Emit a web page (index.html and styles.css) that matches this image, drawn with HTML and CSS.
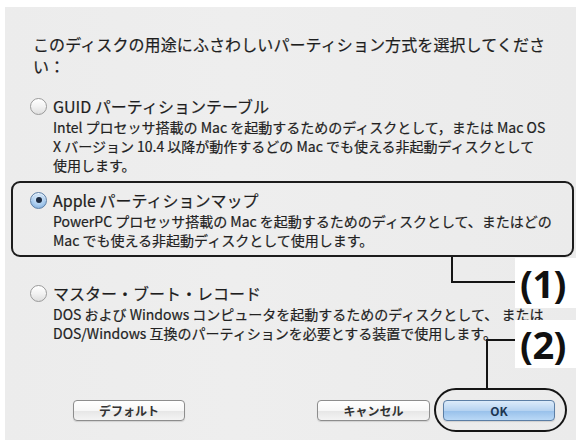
FILE: index.html
```html
<!DOCTYPE html>
<html lang="ja">
<head>
<meta charset="utf-8">
<title>パーティション方式</title>
<link rel="stylesheet" href="styles.css">
</head>
<body>
<div class="dialog">
  <p class="prompt">このディスクの用途にふさわしいパーティション方式を選択してくださ<br>い：</p>

  <div class="option">
    <div class="opt-label"><span class="radio"></span><span>GUID パーティションテーブル</span></div>
    <p class="opt-desc">Intel プロセッサ搭載の Mac を起動するためのディスクとして，または Mac OS<br>X バージョン 10.4 以降が動作するどの Mac でも使える非起動ディスクとして<br>使用します。</p>
  </div>

  <div class="option boxed">
    <div class="opt-label"><span class="radio on"></span><span>Apple パーティションマップ</span></div>
    <p class="opt-desc">PowerPC プロセッサ搭載の Mac を起動するためのディスクとして、またはどの<br>Mac でも使える非起動ディスクとして使用します。</p>
  </div>

  <div class="option mbr">
    <div class="opt-label"><span class="radio"></span><span>マスター・ブート・レコード</span></div>
    <p class="opt-desc">DOS および Windows コンピュータを起動するためのディスクとして、 または<br>DOS/Windows 互換のパーティションを必要とする装置で使用します。</p>
  </div>

  <div class="footer">
    <button class="btn btn-default">デフォルト</button>
    <div class="spacer"></div>
    <button class="btn btn-cancel">キャンセル</button>
    <div class="ok-wrap"><button class="btn btn-ok">OK</button></div>
  </div>

  <div class="leader leader-1"></div>
  <div class="callout callout-1">(1)</div>
  <div class="leader leader-2"></div>
  <div class="callout callout-2">(2)</div>
</div>
</body>
</html>
```
FILE: styles.css
```css
html, body {
  margin: 0;
  padding: 0;
  background: #ffffff;
  overflow: hidden;
}

body {
  width: 579px;
  height: 440px;
  font-family: "Noto Sans CJK JP", "Noto Sans", sans-serif;
  color: #1e1e1e;
}

.dialog {
  position: relative;
  margin: 7px 0 0 5px;
  width: 571px;
  height: 433px;
  background: linear-gradient(90deg, #ececec 0%, #eeeeee 40%, #ebebeb 100%);
  -webkit-text-stroke: 0.2px currentColor;
}

.prompt {
  margin: 0;
  padding: 26px 0 0 28px;
  font-size: 16px;
  line-height: 22px;
  white-space: nowrap;
  letter-spacing: 0.1px;
}

.option {
  margin-top: 19px;
  padding-left: 25px;
}

.opt-label {
  display: flex;
  align-items: center;
  gap: 6px;
  height: 20px;
  font-size: 16px;
  line-height: 20px;
  white-space: nowrap;
}

.opt-desc {
  margin: 2px 0 0 23px;
  font-size: 14px;
  line-height: 19px;
  white-space: nowrap;
  color: #222;
}

.radio {
  position: relative;
  flex: none;
  width: 17px;
  height: 17px;
  box-sizing: border-box;
  border-radius: 50%;
  border: 1px solid #9a9a9a;
  background: linear-gradient(180deg, #ffffff 0%, #f2f2f2 50%, #dedede 100%);
  box-shadow: inset 0 1px 1px rgba(255,255,255,0.9);
}

.radio.on {
  border-color: #5d7fa6;
  background: radial-gradient(circle at 50% 35%, #e3f0fc 0%, #a8cbee 55%, #6f9fd2 100%);
}

.radio.on::after {
  content: "";
  position: absolute;
  left: 50%;
  top: 50%;
  width: 6px;
  height: 6px;
  margin: -3px 0 0 -3px;
  border-radius: 50%;
  background: #1c2a40;
}

.boxed {
  margin: 6px 2px 0 6px;
  padding: 7px 0 5px 17px;
  border: 2px solid #1c1c1c;
  border-radius: 9px;
}

.mbr {
  margin-top: 26px;
}

.footer {
  display: flex;
  align-items: center;
  margin-top: 57px;
  padding: 0 21px 0 68px;
}

.spacer {
  flex: 1;
}

.btn {
  height: 21px;
  box-sizing: border-box;
  padding: 0;
  border: 1px solid #8d8d8d;
  border-radius: 4px;
  background: linear-gradient(180deg, #ffffff 0%, #f7f7f7 50%, #e6e6e6 51%, #f4f4f4 100%);
  font-family: "Noto Sans CJK JP", sans-serif;
  font-size: 12px;
  font-weight: 700;
  line-height: 19px;
  color: #333;
  box-shadow: 0 1px 1px rgba(0,0,0,0.12);
  -webkit-text-stroke: 0;
}

.btn-default { width: 112px; }
.btn-cancel { width: 113px; margin-right: 13px; }

.ok-wrap {
  position: relative;
  display: flex;
}

.btn-ok {
  width: 112px;
  border-color: #5b7ea5;
  background: linear-gradient(180deg, #dcebfa 0%, #b6d3f1 50%, #97c0ea 51%, #b9d8f6 100%);
  color: #1d3550;
}

.ok-wrap::after {
  content: "";
  position: absolute;
  left: -9px;
  top: -12px;
  width: 133px;
  height: 44px;
  box-sizing: border-box;
  border: 2px solid #151515;
  border-radius: 22px;
}

.leader {
  position: absolute;
  box-sizing: border-box;
  border: 0 solid #151515;
}

.leader-1 {
  left: 446px;
  top: 250px;
  width: 66px;
  height: 26px;
  border-left-width: 2px;
  border-bottom-width: 2px;
}

.leader-2 {
  left: 481px;
  top: 332px;
  width: 31px;
  height: 49px;
  border-left-width: 2px;
  border-top-width: 2px;
}

.callout {
  position: absolute;
  left: 510px;
  width: 64px;
  box-sizing: border-box;
  padding-left: 5px;
  background: #ffffff;
  font-family: "Open Sans", "Liberation Sans", sans-serif;
  font-weight: 700;
  font-size: 38px;
  letter-spacing: -0.5px;
  color: #111;
  -webkit-text-stroke: 0;
}

.callout-1 {
  top: 251px;
  height: 50px;
  line-height: 50px;
}

.callout-2 {
  top: 313px;
  height: 48px;
  line-height: 48px;
}
```
